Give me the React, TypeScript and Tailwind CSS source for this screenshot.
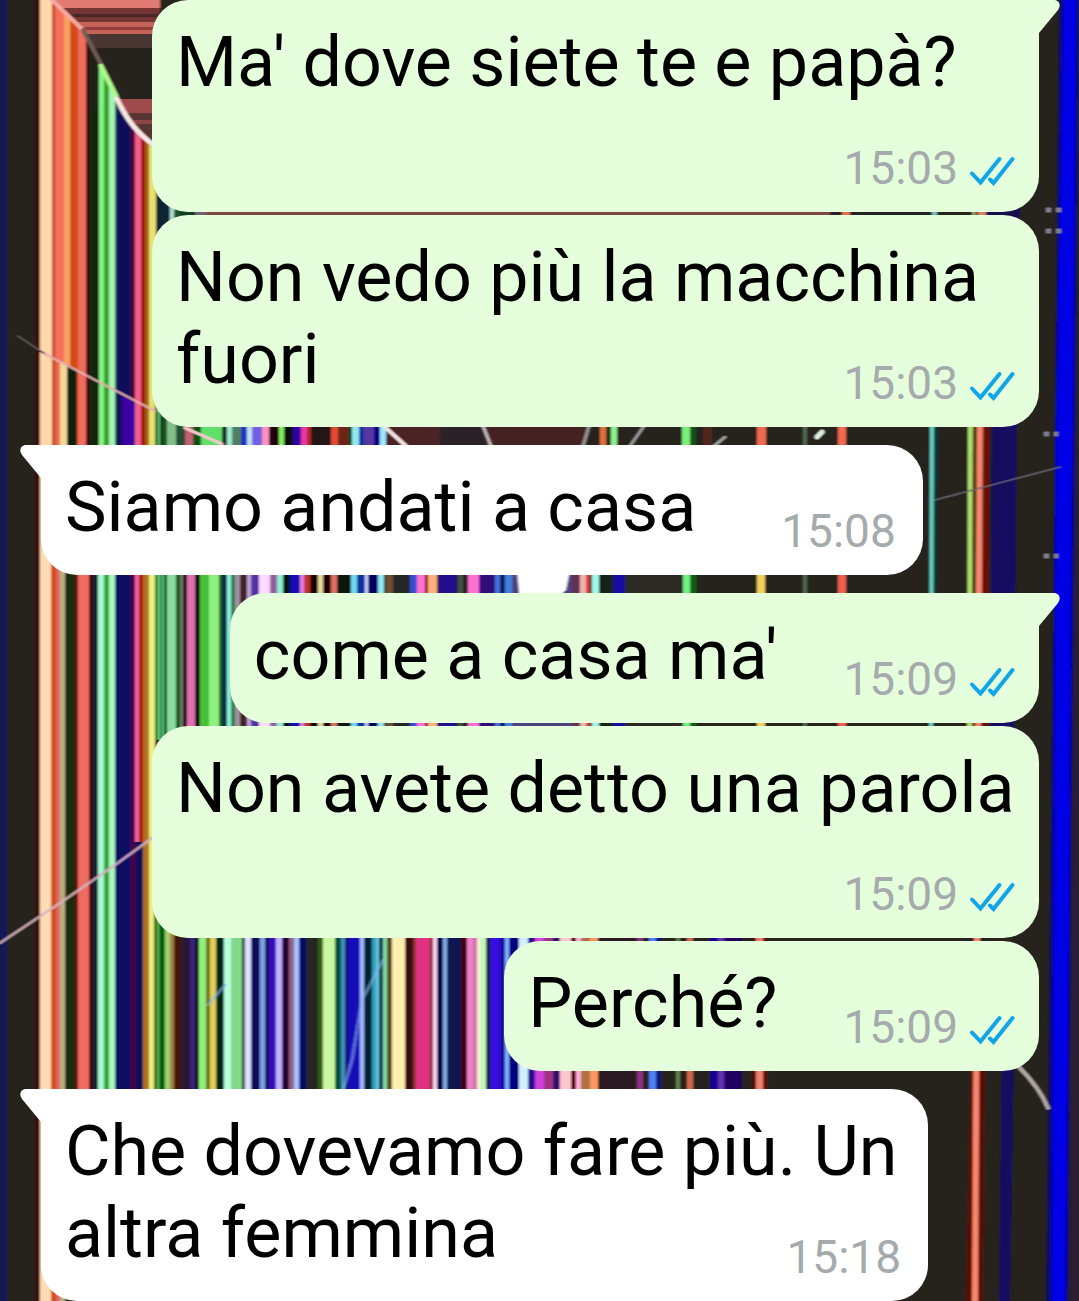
import React from 'react'
import clsx from 'clsx'

interface Message {
	id: number;
	text: string;
	time: string;
	sent: boolean;
	first: boolean;
}

// from x, to x, colour
type Stripe = [number, number, string]

interface Band {
	top: number;
	bottom: number;
	stripes: Stripe[];
}

const messages: Message[] = [
	{ id: 1, text: "Ma' dove siete te e papà?", time: "15:03", sent: true, first: true },
	{ id: 2, text: "Non vedo più la macchina fuori", time: "15:03", sent: true, first: false },
	{ id: 3, text: "Siamo andati a casa", time: "15:08", sent: false, first: true },
	{ id: 4, text: "come a casa ma'", time: "15:09", sent: true, first: true },
	{ id: 5, text: "Non avete detto una parola", time: "15:09", sent: true, first: false },
	{ id: 6, text: "Perché?", time: "15:09", sent: true, first: false },
	{ id: 7, text: "Che dovevamo fare più. Un altra femmina", time: "15:18", sent: false, first: true },
]

const upperLeft: Stripe[] = [
	[35, 40, "#3a0a10"], [40, 52, "#ffd8ac"], [52, 55, "#c84010"], [55, 64, "#f4705c"], [64, 70, "#f8a060"],
	[70, 78, "#d44c14"], [78, 86, "#f06c5c"], [86, 90, "#3a0a0a"], [90, 99, "#0f2510"], [99, 104, "#86f486"],
	[104, 109, "#30a020"], [109, 115, "#a4f4b4"], [115, 117, "#104050"], [117, 131, "#10105a"], [131, 135, "#500040"],
	[135, 141, "#f06088"], [141, 145, "#a01010"], [145, 149, "#a06010"], [149, 156, "#e8e070"], [156, 170, "#0c2830"],
]

const lowerLeft: Stripe[] = [
	[35, 40, "#3a0a10"], [40, 51, "#ffdcb4"], [51, 56, "#d04c18"], [56, 60, "#e06860"], [60, 65, "#b8b080"],
	[65, 75, "#1a2c10"], [75, 78, "#5a1010"], [78, 89, "#ee6c60"], [89, 93, "#400010"], [93, 98, "#082030"],
	[98, 104, "#a8f8d0"], [104, 109, "#30a030"], [109, 115, "#a8f8c0"], [115, 131, "#0a0a64"], [131, 135, "#500048"],
	[135, 143, "#101058"], [143, 149, "#b07020"], [149, 155, "#f0f080"],
]

const bands: Band[] = [
	{
		top: 205, bottom: 222, stripes: [
			[170, 174, "#b0e0d0"], [174, 180, "#205030"], [180, 195, "#104020"], [195, 206, "#706070"], [206, 830, "#804a3c"],
			[830, 842, "#2a2020"], [842, 850, "#e07050"], [850, 930, "#242420"], [932, 937, "#70c0b8"], [972, 976, "#90a060"],
			[978, 986, "#e08060"], [986, 1020, "#141050"],
		],
	},
	{
		top: 390, bottom: 450, stripes: [
			[155, 158, "#107020"], [158, 160, "#60c080"], [160, 163, "#004010"], [163, 167, "#205020"], [167, 176, "#80c088"],
			[176, 184, "#205030"], [185, 193, "#c06070"], [193, 201, "#105010"], [201, 222, "#60e068"], [222, 227, "#183020"],
			[227, 232, "#a0e8d0"], [232, 241, "#508060"], [241, 247, "#2030c0"], [247, 252, "#c0e0ff"], [252, 262, "#7060e0"],
			[262, 269, "#ff90c0"], [269, 279, "#200010"], [279, 284, "#80f060"], [284, 293, "#101010"], [293, 301, "#3000a0"],
			[301, 307, "#e838a0"], [307, 311, "#b02828"], [311, 331, "#201818"], [331, 338, "#e04c34"], [338, 348, "#702018"],
			[348, 352, "#18401c"], [352, 359, "#90e8f0"], [359, 364, "#1030a0"], [364, 374, "#5838a0"], [374, 380, "#000080"],
			[380, 386, "#a0e8ff"], [386, 440, "#4c2428"], [440, 486, "#2c2428"], [486, 586, "#442424"], [600, 606, "#e07040"],
			[606, 611, "#203010"], [611, 617, "#90f090"], [682, 690, "#78f078"], [690, 696, "#185018"], [703, 712, "#50261c"],
			[757, 766, "#f06a50"], [803, 807, "#506850"], [838, 846, "#f06a50"],
		],
	},
	{
		top: 560, bottom: 740, stripes: [
			[135, 139, "#f060a0"], [139, 143, "#b01010"], [155, 158, "#107020"], [158, 160, "#70e090"], [160, 162, "#005010"],
			[162, 164, "#60d080"], [164, 167, "#004010"], [167, 176, "#88dc9c"], [176, 180, "#105020"], [180, 183, "#6a8060"],
			[183, 187, "#200010"], [187, 195, "#e070b0"], [195, 200, "#101008"], [200, 204, "#50c040"], [204, 209, "#40c030"],
			[209, 219, "#90f080"], [219, 222, "#206020"], [222, 227, "#003040"], [227, 231, "#90f0e0"], [231, 235, "#208040"],
			[235, 240, "#a090a0"], [240, 247, "#402020"], [247, 251, "#c0a0d0"], [251, 259, "#5030a0"], [259, 270, "#ffd8ff"],
			[270, 277, "#9060a0"], [277, 283, "#90f0d0"], [283, 290, "#001818"], [290, 300, "#1808b0"], [300, 304, "#e080e0"],
			[304, 310, "#c03030"], [310, 318, "#180000"], [318, 323, "#e8d8a0"], [323, 331, "#1a0505"], [331, 337, "#e07060"],
			[337, 351, "#101808"], [351, 357, "#70d8f0"], [357, 365, "#1030a0"], [365, 368, "#d0d0ff"], [368, 378, "#000060"],
			[378, 384, "#90e8f0"], [386, 393, "#705030"], [393, 410, "#282828"], [410, 417, "#3050d0"], [417, 425, "#ff70d0"],
			[425, 428, "#801010"], [428, 437, "#ffb080"], [439, 456, "#200890"], [458, 463, "#405048"], [468, 479, "#ff70d0"],
			[479, 495, "#300878"], [495, 500, "#4070e0"], [500, 505, "#101860"], [505, 512, "#4080e0"], [512, 572, "#504080"],
			[572, 580, "#603050"], [580, 586, "#f0b0b0"], [586, 590, "#d04030"], [592, 599, "#a0f8e8"], [599, 613, "#182018"],
			[613, 625, "#1808a0"], [625, 683, "#2a2a20"], [683, 690, "#70f080"], [690, 696, "#106010"], [757, 765, "#f0d060"],
			[803, 807, "#506850"], [838, 846, "#f06050"],
		],
	},
	{ top: 740, bottom: 842, stripes: [[135, 139, "#f060a0"], [139, 143, "#b01010"]] },
	{
		top: 900, bottom: 1110, stripes: [
			[154, 157, "#106010"], [157, 159, "#60c050"], [159, 165, "#006010"], [165, 170, "#a0d070"],
			[170, 174, "#a08040"], [174, 182, "#401808"], [182, 190, "#281838"], [190, 195, "#382080"], [195, 199, "#081808"],
			[199, 206, "#90f080"], [206, 210, "#707000"], [210, 216, "#e0d060"], [216, 224, "#002818"], [224, 231, "#b8ffe0"],
			[231, 242, "#80d888"], [242, 245, "#204030"], [245, 251, "#e0e0ff"], [251, 260, "#080860"], [260, 265, "#80a0e0"],
			[265, 269, "#080860"], [269, 276, "#3808b8"], [276, 282, "#c0b0ff"], [282, 289, "#280030"], [289, 294, "#906080"],
			[294, 299, "#a8c0ff"], [299, 306, "#001068"], [306, 318, "#282828"], [318, 323, "#306010"], [323, 335, "#c8f8a0"],
			[335, 341, "#005040"], [341, 345, "#4090b8"], [345, 348, "#101070"], [348, 360, "#1808b8"], [360, 364, "#a0b8ff"],
			[364, 372, "#002030"], [372, 376, "#30a0c0"], [376, 379, "#60c8d8"], [379, 383, "#103050"], [383, 387, "#80d8a0"],
			[387, 392, "#504820"], [392, 405, "#fff0b0"], [405, 413, "#380810"], [413, 416, "#903030"], [416, 430, "#e03080"],
			[430, 433, "#803030"], [433, 437, "#ffd0f0"], [437, 443, "#001040"], [443, 447, "#80a8e0"], [447, 461, "#0c1450"],
			[461, 467, "#400010"], [467, 473, "#f080c8"], [473, 477, "#d070b0"], [477, 480, "#fff0d0"], [480, 486, "#c0f8c0"],
			[486, 490, "#102020"], [490, 500, "#3810e0"], [500, 505, "#1808a0"], [505, 509, "#80b0ff"], [509, 519, "#000080"],
			[519, 528, "#d0f0ff"], [528, 535, "#281090"], [535, 544, "#d040e0"], [544, 553, "#a03080"], [553, 560, "#300870"],
			[560, 571, "#ffc8d0"], [571, 576, "#600010"], [576, 581, "#ffb0d8"], [581, 590, "#b07040"], [590, 598, "#ff9860"],
			[598, 634, "#2a1c20"], [637, 643, "#8a3080"], [649, 656, "#5080f0"], [656, 661, "#081880"], [676, 680, "#608050"],
			[687, 693, "#d06850"], [710, 718, "#180090"], [718, 724, "#6030b0"], [724, 742, "#200060"], [752, 756, "#500800"],
			[756, 763, "#f08070"], [763, 767, "#600800"],
		],
	},
]

function Stripes({ stripes, top, bottom }: { stripes: Stripe[]; top: number; bottom: number }) {
	return (
		<>
			{stripes.map(([from, to, color]) => (
				<rect key={`${from}-${to}`} x={from} y={top} width={to - from} height={bottom - top} fill={color} />
			))}
		</>
	)
}

function Wallpaper() {
	return (
		<svg
			className="absolute inset-0 h-full w-full"
			viewBox="0 0 1079 1301"
			preserveAspectRatio="none"
			aria-hidden="true"
		>
			<defs>
				<filter id="soften" x="0" y="0" width="100%" height="100%">
					<feGaussianBlur stdDeviation="1.1 0.7" />
				</filter>
				<clipPath id="panel">
					<path d="M0 0H52L83 30L101 64C115 100 127 128 156 150H1079V1301H0Z" />
				</clipPath>
			</defs>
			<g filter="url(#soften)">
				<rect width="1079" height="1301" fill="#26241f" />
				<rect width="7" height="1301" fill="#17175c" />

				{/* broken corner */}
				<rect x="50" width="110" height="8" fill="#e07a72" />
				<rect x="50" y="8" width="110" height="14" fill="#743634" />
				<rect x="50" y="14" width="110" height="3" fill="#4a2828" />
				<rect x="70" y="22" width="90" height="12" fill="#c46258" />
				<rect x="76" y="27" width="90" height="3" fill="#903c38" />
				<rect x="86" y="34" width="80" height="14" fill="#4a3632" />
				<rect x="110" y="99" width="50" height="14" fill="#a04c4c" />
				<rect x="110" y="113" width="50" height="40" fill="#583430" />
				<rect x="120" y="120" width="40" height="4" fill="#8c4444" />

				<g clipPath="url(#panel)">
					<Stripes stripes={upperLeft} top={0} bottom={450} />
				</g>
				<path d="M90 40L99 62V110H90Z" fill="#1c2018" />
				<path d="M55 358L67 365L77 370V450H55Z" fill="#0f2008" />
				<path d="M55 358L60 361V450H55Z" fill="#e86850" />
				<path d="M60 361L67 365V450H60Z" fill="#f4d898" />
				<path d="M122 396L135 403V450H122Z" fill="#3c00a4" />
				<Stripes stripes={lowerLeft} top={450} bottom={1301} />
				{bands.map(band => (
					<Stripes key={band.top} {...band} />
				))}
				<path d="M516 560H572L566 590L552 602H520Z" fill="#ffffff" />

				{/* right side */}
				<path d="M933 400H938L934 740H929Z" fill="#003c38" />
				<path d="M930 400H934L933 740H929Z" fill="#68d0c4" />
				<path d="M968 400H973L972 740H967Z" fill="#b0e070" />
				<path d="M973 400H977L976 740H972Z" fill="#4c3800" />
				<path d="M971 1050H985L983 1301H966Z" fill="#5c1000" />
				<path d="M977 400H983L978 1301H972Z" fill="#f8866e" />
				<path d="M983 400H989L988 740H983Z" fill="#701000" />
				<path d="M992 400H1017L1014 740H990Z" fill="#160c60" />
				<path d="M1002 1050H1014L1010 1301H999Z" fill="#140a60" />
				<path d="M1072 300H1079V1301H1064Z" fill="#2c1c34" />
				<path d="M1059 0H1079L1068 1301H1046Z" fill="#080864" />
				<path d="M1063 0H1077L1073 440L1066 1301H1051L1056 440Z" fill="#0000e4" />

				{/* cracks */}
				<g fill="none" strokeLinecap="round">
					<path d="M52 0L83 30" stroke="#f8a8a0" strokeWidth="4" />
					<path d="M83 30L101 64" stroke="#705c54" strokeWidth="4" />
					<path d="M101 66L116 96" stroke="#b0f890" strokeWidth="5" />
					<path d="M117 99C127 120 136 132 156 147" stroke="#f8e8e4" strokeWidth="5" />
					<path d="M18 336L45 354" stroke="#5a5450" strokeWidth="2" />
					<path d="M45 354L155 411" stroke="#e8b0b0" strokeWidth="3" strokeOpacity="0.8" />
					<path d="M185 428L222 444" stroke="#f0c8c8" strokeWidth="3" />
					<path d="M386 428L406 446" stroke="#f0e4e0" strokeWidth="4" />
					<path d="M483 426L491 446" stroke="#c8c0c0" strokeWidth="3" />
					<path d="M589 426L583 446M644 426L630 446M725 437L714 446" stroke="#9c9c9c" strokeWidth="3" />
					<path d="M822 432L817 437" stroke="#e0f0e0" strokeWidth="5" />
					<path d="M935 500L1060 467" stroke="#6c6c78" strokeWidth="2" strokeOpacity="0.7" />
					<path d="M0 943L60 903L115 865L155 836" stroke="#d8b4c0" strokeWidth="3" strokeOpacity="0.8" />
					<path d="M225 985L208 1005M383 960L362 1000L352 1060L343 1090" stroke="#88b8f0" strokeWidth="3" strokeOpacity="0.6" />
					<path d="M1018 1066Q1040 1088 1048 1108" stroke="#b0a8a4" strokeWidth="4" />
				</g>
				<g stroke="#80808e" strokeWidth="5" strokeDasharray="5 5" fill="none">
					<path d="M1046 210H1062M1046 231H1062M1044 434H1058M1044 556H1058" />
				</g>
			</g>
		</svg>
	)
}

function Ticks() {
	return (
		<svg
			className="mb-2 h-[31px] w-[46px]"
			viewBox="0 0 46 31"
			fill="none"
			stroke="#10a5e9"
			strokeWidth="4"
			strokeLinecap="round"
			role="img"
			aria-label="Letto"
		>
			<path d="M3 17.5L11.5 26.5L30.5 3" />
			<path d="M21 23.5L24.500 27L43.5 3" />
		</svg>
	)
}

function Tail({ sent }: { sent: boolean }) {
	return (
		<svg
			className={clsx(
				"absolute top-0 h-[33px] w-[22px]",
				sent ? "-right-[21px] text-[#e5ffdc]" : "-left-[21px] -scale-x-100 text-white",
			)}
			viewBox="0 0 22 33"
			fill="currentColor"
			aria-hidden="true"
		>
			<path d="M0 0H16C21 0 23.5 5 20 10L1 33H0Z" />
		</svg>
	)
}

function Bubble({ message }: { message: Message }) {
	const { text, time, sent, first } = message

	return (
		<li
			className={clsx(
				"flex",
				sent ? "justify-end pl-[111px]" : "justify-start pr-[111px]",
				first ? "mt-[18px] first:mt-0" : "mt-[3px]",
			)}
		>
			<div
				className={clsx(
					"relative rounded-[36px] pt-[21px] pr-5 pb-[17px] pl-6",
					sent ? "bg-[#e5ffdc]" : "bg-white",
					first && (sent ? "rounded-tr-none" : "rounded-tl-none"),
				)}
			>
				{first && <Tail sent={sent} />}
				<p className="flow-root text-[70px] leading-[82px] text-black">
					{text}
					<span
						className={clsx(
							"float-right flex h-[92px] items-end gap-[11px] text-[46px] leading-[54px] text-[#a5abad]",
							sent ? "mr-1 ml-[66px]" : "mr-[7px] ml-[85px]",
						)}
					>
						<time>{time}</time>
						{sent && <Ticks />}
					</span>
				</p>
			</div>
		</li>
	)
}

export default function App() {
	return (
		<main className="relative min-h-screen overflow-hidden bg-[#26241f] font-['Roboto',sans-serif]">
			<Wallpaper />
			<ul className="relative flex flex-col pr-10 pl-[41px]">
				{messages.map(message => (
					<Bubble key={message.id} message={message} />
				))}
			</ul>
		</main>
	)
}
